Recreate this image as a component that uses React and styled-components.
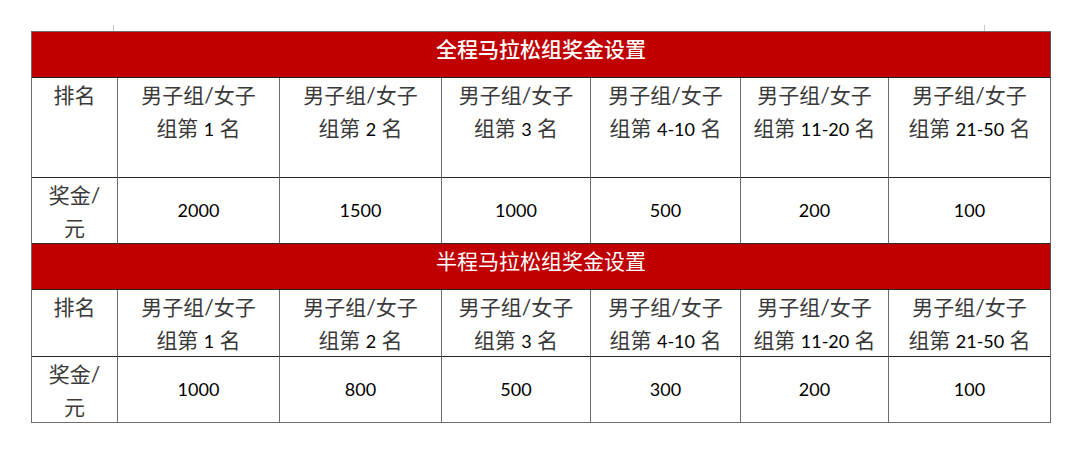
import React from "react";
import styled, { createGlobalStyle } from "styled-components";

const Global = createGlobalStyle`
  html, body { margin: 0; padding: 0; background: #fff; }
  body { font-family: Lato, "Noto Sans CJK SC", sans-serif; }
`;

const Page = styled.div`
  width: 1080px;
  height: 456px;
  padding-top: 25px;
  box-sizing: border-box;
`;

const Marks = styled.div`
  display: flex;
  height: 6px;
  padding-left: 113px;
  gap: 870px;
`;

const Mark = styled.div`
  width: 1px;
  height: 6px;
  background: #c8c8c8;
`;

const Grid = styled.div`
  margin-left: 31px;
  width: 1020px;
  box-sizing: border-box;
  display: grid;
  grid-template-columns: 86px 162px 162px 149px 150px 148px 162px;
  grid-template-rows: 46px 100px 66px 46px 67px 66px;
  border-left: 1px solid #6e6e6e;
  border-top: 1px solid #6e6e6e;
`;

const Title = styled.div`
  grid-column: 1 / -1;
  background: #c00000;
  color: #fff;
  text-align: center;
  font-family: "Noto Sans CJK SC", sans-serif;
  font-size: 21px;
  font-weight: ${(p) => (p.$strong ? 500 : 400)};
  line-height: 32px;
  padding-top: 0;
  border-right: 1px solid #555;
  border-bottom: 1px solid #222;
  box-sizing: border-box;
`;

const Cell = styled.div`
  box-sizing: border-box;
  border-right: 1px solid #6e6e6e;
  border-bottom: 1px solid ${(p) => (p.$last ? "#6e6e6e" : "#2a2a2a")};
  display: flex;
  flex-direction: column;
  align-items: center;
  justify-content: ${(p) => (p.$top ? "flex-start" : "center")};
  text-align: center;
  font-family: Lato, "Noto Sans CJK SC", sans-serif;
  font-size: 21px;
  line-height: 33px;
  color: #3a3a3a;
  overflow: hidden;
`;

const Line = styled.span`
  display: block;
  white-space: nowrap;
`;

const Num = styled.span`
  font-family: Lato, sans-serif;
  font-size: 18px;
  color: #000;
`;

const ranks = ["1", "2", "3", "4-10", "11-20", "21-50"];

const sections = [
  { title: "全程马拉松组奖金设置", strong: true, prizes: ["2000", "1500", "1000", "500", "200", "100"] },
  { title: "半程马拉松组奖金设置", strong: false, prizes: ["1000", "800", "500", "300", "200", "100"] },
];

export default function App() {
  return (
    <Page>
      <Global />
      <Marks>
        <Mark />
        <Mark />
      </Marks>
      <Grid>
        {sections.map((s, si) => (
          <React.Fragment key={s.title}>
            <Title $strong={s.strong}>{s.title}</Title>
            <Cell $top>
              <Line>排名</Line>
            </Cell>
            {ranks.map((r) => (
              <Cell $top key={r}>
                <Line>男子组/女子</Line>
                <Line>
                  组第 <Num>{r}</Num> 名
                </Line>
              </Cell>
            ))}
            <Cell $last={si === 1}>
              <Line>奖金/</Line>
              <Line>元</Line>
            </Cell>
            {s.prizes.map((p, i) => (
              <Cell $last={si === 1} key={i}>
                <Num>{p}</Num>
              </Cell>
            ))}
          </React.Fragment>
        ))}
      </Grid>
    </Page>
  );
}
